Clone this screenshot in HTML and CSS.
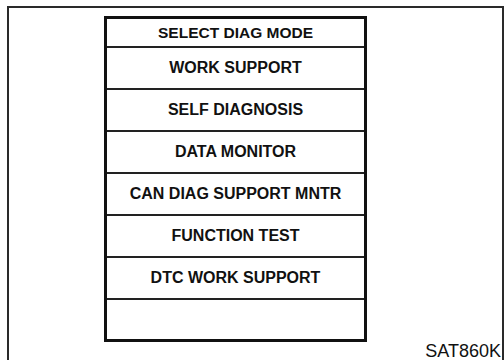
FILE: index.html
```html
<!DOCTYPE html>
<html>
<head>
<meta charset="utf-8">
<link rel="stylesheet" href="styles.css">
</head>
<body>
<div class="frame">
  <div class="menu">
    <div class="row head">SELECT DIAG MODE</div>
    <div class="row">WORK SUPPORT</div>
    <div class="row">SELF DIAGNOSIS</div>
    <div class="row">DATA MONITOR</div>
    <div class="row">CAN DIAG SUPPORT MNTR</div>
    <div class="row">FUNCTION TEST</div>
    <div class="row">DTC WORK SUPPORT</div>
    <div class="row last"></div>
  </div>
  <div class="caption">SAT860K</div>
</div>
</body>
</html>
```
FILE: styles.css
```css
html, body {
  margin: 0;
  padding: 0;
  background: #fff;
  overflow: hidden;
}
body {
  width: 504px;
  height: 360px;
  font-family: "Liberation Sans", Arial, sans-serif;
  color: #111;
}
.frame {
  box-sizing: border-box;
  margin: 6px 0 0 7px;
  width: 497px;
  height: 354px;
  border: 2px solid #2a2a2a;
  border-bottom: none;
  padding: 8px 0 0 95px;
  display: flex;
  flex-direction: column;
}
.menu {
  box-sizing: border-box;
  width: 263px;
  height: 326px;
  border: 3px solid #111;
  display: flex;
  flex-direction: column;
}
.row {
  height: 40px;
  border-bottom: 2px solid #222;
  display: flex;
  align-items: center;
  justify-content: center;
  font-weight: bold;
  font-size: 16px;
  letter-spacing: 0;
}
.row.head {
  height: 27px;
  font-size: 15.5px;
}
.row.last {
  height: 39px;
  border-bottom: none;
}
.caption {
  align-self: flex-end;
  margin-top: 1px;
  padding-right: 1px;
  font-size: 18px;
  line-height: 16px;
  color: #111;
}
```
